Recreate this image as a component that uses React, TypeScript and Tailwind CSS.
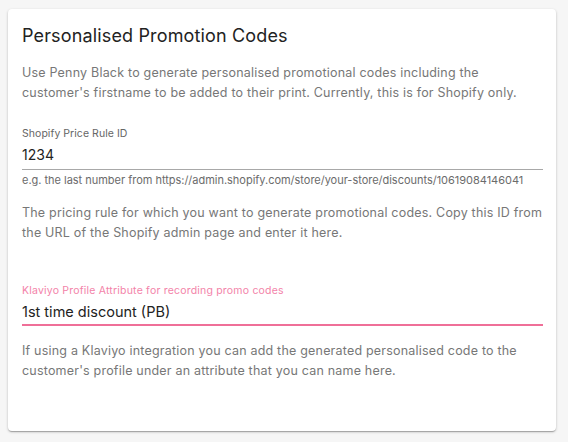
import React from "react";

export default function App() {
  return (
    <div className="min-h-[442px] bg-[#f6f6f6] pt-[9px] pl-[8px] font-['Inter',sans-serif]">
      <div className="w-[548px] h-[422px] bg-white rounded-[4px] shadow-[0_1px_3px_rgba(0,0,0,0.2),0_1px_1px_rgba(0,0,0,0.14),0_2px_1px_-1px_rgba(0,0,0,0.12)] pl-[14px] pr-[13px] pt-[13px]">
        <h1 className="text-[18px] leading-[28px] tracking-[0.15px] text-[#222222]">
          Personalised Promotion Codes
        </h1>
        <p className="mt-[13px] text-[12.5px] leading-[20px] tracking-[0.2px] text-[#777777]">
          Use Penny Black to generate personalised promotional codes including the
          <br />
          customer's firstname to be added to their print. Currently, this is for Shopify only.
        </p>

        <div className="mt-[24px]">
          <div className="text-[10.5px] leading-[14px] tracking-[0.05px] text-[#666666]">
            Shopify Price Rule ID
          </div>
          <div className="mt-[4px] pb-[4px] border-b border-[#a8a8a8] text-[14px] leading-[20px] text-[#222222]">
            1234
          </div>
          <div className="mt-[3px] text-[11px] leading-[14px] tracking-[-0.02px] text-[#6b6b6b]">
            e.g. the last number from https://admin.shopify.com/store/your-store/discounts/10619084146041
          </div>
        </div>

        <p className="mt-[16px] text-[12.5px] leading-[20px] tracking-[0.2px] text-[#777777]">
          The pricing rule for which you want to generate promotional codes. Copy this ID from
          <br />
          the URL of the Shopify admin page and enter it here.
        </p>

        <div className="mt-[41px]">
          <div className="text-[10.5px] leading-[14px] tracking-[0.2px] text-[#f383a9]">
            Klaviyo Profile Attribute for recording promo codes
          </div>
          <div className="mt-[4px] pb-[2px] border-b-2 border-[#ef6f98] text-[14.5px] leading-[20px] text-[#222222]">
            1st time discount (PB)
          </div>
        </div>

        <p className="mt-[15px] text-[12.5px] leading-[20px] tracking-[0.2px] text-[#777777]">
          If using a Klaviyo integration you can add the generated personalised code to the
          <br />
          customer's profile under an attribute that you can name here.
        </p>
      </div>
    </div>
  );
}
